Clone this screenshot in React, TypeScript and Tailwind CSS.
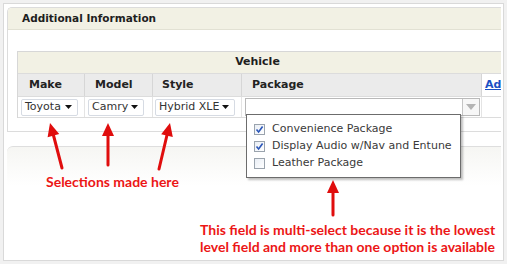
import React from "react";

const ui = { fontFamily: '"DejaVu Sans", Verdana, sans-serif' };
const note = { fontFamily: 'Lato, "Open Sans", sans-serif' };

function Caret() {
  return (
    <svg width="7" height="4" viewBox="0 0 7 4" className="shrink-0">
      <path d="M0 0h7L3.5 4z" fill="#111" />
    </svg>
  );
}

function Select({ label, width }: { label: string; width: string }) {
  return (
    <div
      className={`flex h-[17px] items-center justify-between rounded-[2px] border border-[#d6dbe3] bg-white pl-[3px] pr-[5px] text-[11px] text-[#333] ${width}`}
    >
      <span>{label}</span>
      <Caret />
    </div>
  );
}

function Check({ checked }: { checked: boolean }) {
  return (
    <span className="flex h-[11px] w-[11px] items-center justify-center border border-[#9aa3ad] bg-gradient-to-br from-[#e9eef5] to-[#ffffff]">
      {checked ? (
        <svg width="9" height="9" viewBox="0 0 9 9">
          <path d="M1.5 4.5 3.6 7 7.6 1.5" fill="none" stroke="#2b56b8" strokeWidth="1.6" />
        </svg>
      ) : null}
    </span>
  );
}

const packages = [
  { name: "Convenience Package", checked: true },
  { name: "Display Audio w/Nav and Entune", checked: true },
  { name: "Leather Package", checked: false },
];

function Arrows() {
  return (
    <svg
      className="pointer-events-none absolute left-0 top-0"
      width="507"
      height="264"
      viewBox="0 0 507 264"
    >
      <g stroke="#e00d0d" strokeWidth="3" strokeLinecap="round">
        <line x1="62" y1="168" x2="53.4" y2="135" />
        <line x1="108" y1="165" x2="108" y2="135" />
        <line x1="159" y1="169" x2="167" y2="135" />
        <line x1="333" y1="215" x2="333" y2="192" />
      </g>
      <g fill="#e00d0d">
        <polygon points="50,123 59.2,134 47.6,137.2" />
        <polygon points="108,123 102,136 114,136" />
        <polygon points="170,123 172.8,137 161.2,134.2" />
        <polygon points="333,180 327,193 339,193" />
      </g>
    </svg>
  );
}

export default function App() {
  return (
    <div className="relative h-[264px] w-[507px] overflow-hidden bg-[#f1f1f1] p-[3px]">
      <div className="h-full overflow-hidden border border-[#d9d9d9] bg-white pl-[3px] pr-[2px] pt-[3px]" style={ui}>
        {/* panel 1 */}
        <div className="h-[125px] overflow-hidden rounded-tl-[5px] border-b border-l border-t border-[#dcdcdc]">
          <div className="flex h-[22px] items-center border-b border-[#e2e1d3] bg-[#f2f1e4] pl-[14px] text-[10.5px] font-bold text-[#1e1e1e]">
            Additional Information
          </div>
          <div className="ml-[9px] mt-[21px] border-l border-t border-[#d7d7d7]">
            <div className="flex h-[22px] items-center justify-center border-b border-[#dcdcdc] bg-[#f2f1e4] pr-[4px] text-[11px] font-bold text-[#1e1e1e]">
              Vehicle
            </div>
            <div className="grid grid-cols-[67px_68px_89px_240px_1fr] border-b border-[#dcdcdc] bg-[#ebebeb] text-[11px] font-bold text-[#222]">
              <div className="flex h-[22px] items-center border-r border-[#d6d6d6] pl-[11px]">Make</div>
              <div className="flex h-[22px] items-center border-r border-[#d6d6d6] pl-[10px]">Model</div>
              <div className="flex h-[22px] items-center border-r border-[#d6d6d6] pl-[9px]">Style</div>
              <div className="flex h-[22px] items-center border-r border-[#d6d6d6] pl-[10px]">Package</div>
              <div className="flex h-[22px] items-center overflow-hidden whitespace-nowrap bg-white pl-[3px] text-[#1a4fc4] underline">
                Add
              </div>
            </div>
            <div className="grid h-[21px] grid-cols-[67px_68px_89px_240px_1fr] border-b border-[#dcdcdc]">
              <div className="flex items-center border-r border-[#e4e4e4] pl-[3px]">
                <Select label="Toyota" width="w-[57px]" />
              </div>
              <div className="flex items-center border-r border-[#e4e4e4] pl-[3px]">
                <Select label="Camry" width="w-[56px]" />
              </div>
              <div className="flex items-center border-r border-[#e4e4e4] pl-[2px]">
                <Select label="Hybrid XLE" width="w-[80px]" />
              </div>
              <div className="flex items-center border-r border-[#e4e4e4] pl-[3px]">
                <div className="flex h-[18px] w-[235px] items-center justify-end border border-[#b9b9b9] bg-white">
                  <span className="flex h-[16px] w-[17px] shrink-0 items-center justify-center border-l border-[#c4c4c4] bg-[#f7f7f7]">
                    <svg width="10" height="6" viewBox="0 0 10 6">
                      <path d="M0 0h10L5 6z" fill="#b4b4b4" />
                    </svg>
                  </span>
                </div>
              </div>
              <div />
            </div>
          </div>
        </div>

        {/* panel 2 */}
        <div className="mt-[14px] h-[40px] rounded-tl-[6px] border-t border-[#dedede] bg-gradient-to-b from-[#f6f6f3] to-white" />
      </div>

      {/* package dropdown */}
      <div
        className="absolute left-[246px] top-[114px] h-[64px] w-[215px] border border-[#6c6c6c] bg-white pl-[7px] pt-[6px] shadow-[2px_2px_2px_rgba(0,0,0,0.25)]"
        style={ui}
      >
        {packages.map((p) => (
          <div key={p.name} className="flex h-[17px] items-center gap-[7px] text-[11px] text-[#3a3a3a]">
            <Check checked={p.checked} />
            <span>{p.name}</span>
          </div>
        ))}
      </div>

      <Arrows />

      <div className="absolute left-[46px] top-[173px] text-[14px] font-bold leading-[17px] text-[#ec1616]" style={note}>
        Selections made here
      </div>
      <div className="absolute left-[200px] top-[221px] text-[14px] font-bold leading-[17px] text-[#ec1616]" style={note}>
        This field is multi-select because it is the lowest
        <br />
        level field and more than one option is available
      </div>
    </div>
  );
}
